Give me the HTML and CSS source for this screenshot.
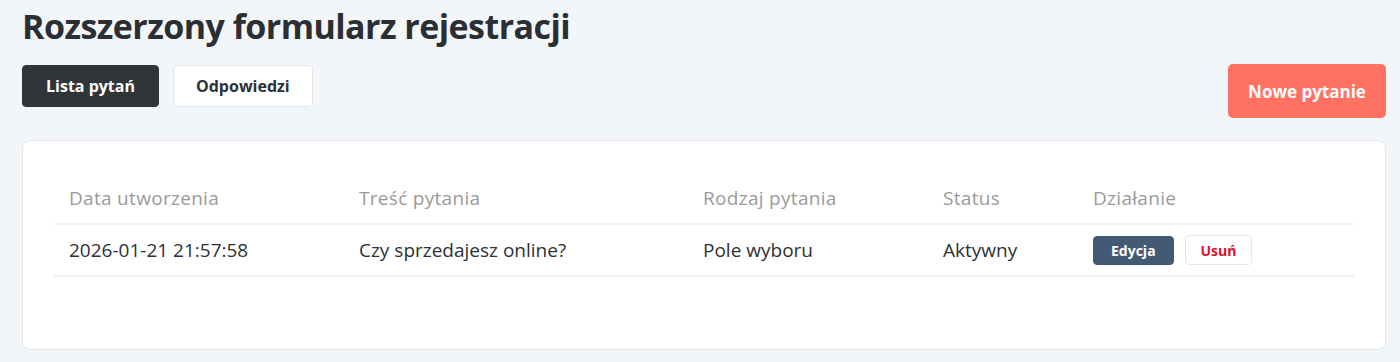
FILE: index.html
```html
<!DOCTYPE html>
<html>
<head>
    <title>Rozszerzony formularz rejestracji</title>
    <meta charset="utf-8">
    <meta name="viewport" content="width=device-width, initial-scale=1">
    <link rel="stylesheet" href="styles.css">
</head>
<body>
<div class="page">
    <h1>Rozszerzony formularz rejestracji</h1>
    <div class="toolbar">
        <div class="tabs">
            <button class="tab active">Lista pytań</button>
            <button class="tab">Odpowiedzi</button>
        </div>
        <button class="btn-new">Nowe pytanie</button>
    </div>
    <div class="card">
        <table>
            <thead>
                <tr>
                    <th class="col-date">Data utworzenia</th>
                    <th class="col-text">Treść pytania</th>
                    <th class="col-type">Rodzaj pytania</th>
                    <th class="col-status">Status</th>
                    <th>Działanie</th>
                </tr>
            </thead>
            <tbody>
                <tr>
                    <td>2026-01-21 21:57:58</td>
                    <td>Czy sprzedajesz online?</td>
                    <td>Pole wyboru</td>
                    <td>Aktywny</td>
                    <td>
                        <button class="btn-edit">Edycja</button>
                        <button class="btn-delete">Usuń</button>
                    </td>
                </tr>
            </tbody>
        </table>
    </div>
</div>
</body>
</html>
```

FILE: styles.css
```css
* {
    box-sizing: border-box;
}

body {
    font-family: "Open Sans", Lato, sans-serif;
    background-color: #f3f6f9;
    color: #2d3135;
    margin: 0;
}

.page {
    padding: 0 14px 0 22px;
}

h1 {
    font-size: 34px;
    font-weight: 700;
    margin: 0;
    padding-top: 3px;
    height: 64px;
    color: #2b2f33;
    letter-spacing: -0.55px;
}

.toolbar {
    display: flex;
    justify-content: space-between;
    align-items: flex-start;
}

.tabs {
    display: flex;
    gap: 14px;
    margin-top: 1px;
}

button {
    font-family: inherit;
    cursor: pointer;
}

.tab {
    height: 42px;
    padding: 0 22px;
    font-size: 16px;
    font-weight: 700;
    background-color: #fff;
    color: #2d3135;
    border: 1px solid #e3e6ea;
    border-radius: 4px;
}

.tab.active {
    background-color: #30353a;
    border-color: #30353a;
    color: #fff;
    padding: 0 23px;
}

.btn-new {
    height: 54px;
    width: 158px;
    font-size: 17px;
    font-weight: 700;
    color: #fff;
    background-color: #ff7262;
    border: none;
    border-radius: 5px;
}

.card {
    margin-top: 22px;
    height: 210px;
    background-color: #fff;
    border: 1px solid #e2e6ea;
    border-radius: 8px;
    padding: 31px 31px;
}

table {
    width: 100%;
    border-collapse: collapse;
    font-size: 19px;
}

th {
    text-align: left;
    font-weight: 400;
    color: #9a9a9a;
    height: 52px;
    padding: 0 15px;
    border-bottom: 2px solid #eef0f2;
    letter-spacing: 0.3px;
}

td {
    height: 52px;
    padding: 0 15px;
    border-bottom: 2px solid #eef0f2;
}

.col-date {
    width: 290px;
}

.col-text {
    width: 344px;
}

.col-type {
    width: 240px;
}

.col-status {
    width: 150px;
}

.btn-edit {
    height: 29px;
    padding: 0 17px;
    font-size: 14px;
    font-weight: 700;
    color: #fff;
    background-color: #435a74;
    border: 1px solid #435a74;
    border-radius: 4px;
}

.btn-delete {
    height: 30px;
    padding: 0 15px;
    margin-left: 6px;
    font-size: 14px;
    font-weight: 700;
    color: #e0102a;
    background-color: #fff;
    border: 1px solid #e3e6ea;
    border-radius: 4px;
}
```
